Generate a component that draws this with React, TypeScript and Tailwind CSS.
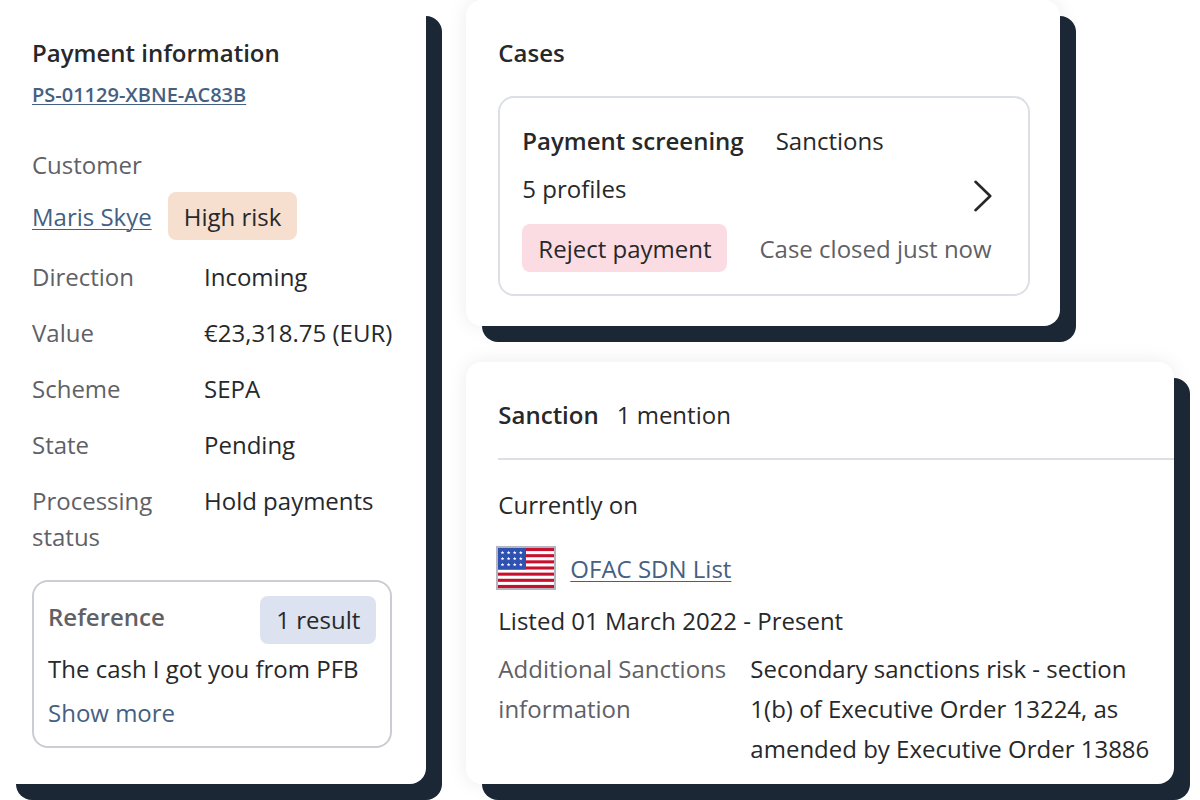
import type { ReactNode } from "react";

const details = [
  { label: "Direction", value: "Incoming" },
  { label: "Value", value: "€23,318.75 (EUR)" },
  { label: "Scheme", value: "SEPA" },
  { label: "State", value: "Pending" },
  { label: "Processing status", value: "Hold payments" },
];

function Card({ className = "", children }: { className?: string; children: ReactNode }) {
  return (
    <section
      className={`rounded-2xl bg-white ${className}`}
    >
      {children}
    </section>
  );
}

function Pill({ tone, children }: { tone: string; children: ReactNode }) {
  return (
    <span className={`flex h-12 items-center rounded-lg px-4 whitespace-nowrap ${tone}`}>
      {children}
    </span>
  );
}

const STAR = "M0-1.9L.5-.6 1.8-.6.8.3 1.1 1.6 0 .8-1.1 1.6-.8.3-1.8-.6-.5-.6z";

function UsFlag() {
  return (
    <svg viewBox="0 0 60 44" className="-ml-0.5 h-11 w-[60px] shrink-0" role="img" aria-label="United States">
      <rect width="60" height="44" fill="#b3b5c1" />
      <rect x="2" y="2" width="56" height="40" fill="#fff" />
      {[0, 2, 4, 6, 8, 10, 12].map((n) => (
        <rect key={n} x="2" y={2 + (n * 40) / 13} width="56" height={40 / 13} fill="#c8102e" />
      ))}
      <rect x="2" y="2" width="28" height="21.5" fill="#2f52b0" />
      {[6.6, 12.6, 18.6].map((y) =>
        [6.5, 12.6, 18.7, 24.8].map((x) => (
          <path key={`${x}-${y}`} d={STAR} transform={`translate(${x} ${y})`} fill="#fff" />
        )),
      )}
    </svg>
  );
}

function PaymentInformation() {
  return (
    <Card className="pt-[35px] pr-[34px] pb-9 pl-8 shadow-[16px_16px_0_0_#1b2735]">
      <h2 className="font-semibold">Payment information</h2>
      <a
        href="#payment"
        className="mt-2.5 block w-fit text-xl leading-7 font-semibold text-[#456082] underline decoration-1 underline-offset-2"
      >
        PS-01129-XBNE-AC83B
      </a>
      <p className="mt-[38px] text-[#5f6166]">Customer</p>
      <div className="mt-[9px] flex items-center gap-4">
        <a href="#customer" className="pt-0.5 text-[#456082] underline decoration-1 underline-offset-3">
          Maris Skye
        </a>
        <Pill tone="bg-[#f6dfcf] pt-0.5">High risk</Pill>
      </div>
      <dl className="mt-[19px] flex flex-col gap-5">
        {details.map(({ label, value }) => (
          <div key={label} className="grid grid-cols-[140px_1fr] gap-8">
            <dt className="text-[#5f6166]">{label}</dt>
            <dd className="whitespace-nowrap">{value}</dd>
          </div>
        ))}
      </dl>
      <div className="mt-[25px] rounded-2xl border-2 border-[#cacdd2] p-3.5">
        <div className="flex items-start justify-between">
          <h3 className="pt-[3px] font-semibold text-[#5f6166]">Reference</h3>
          <Pill tone="bg-[#dce2f0]">1 result</Pill>
        </div>
        <p className="mt-[7px] whitespace-nowrap">The cash I got you from PFB</p>
        <button type="button" className="mt-2 mb-px block cursor-pointer text-[#456082]">
          Show more
        </button>
      </div>
    </Card>
  );
}

const HALO = "shadow-[16px_16px_0_0_#1b2735,0_0_20px_0_rgba(0,0,0,0.08)]";

function Cases() {
  return (
    <Card className={`mr-[114px] pt-[35px] pr-[30px] pb-[30px] pl-8 ${HALO}`}>
      <h2 className="font-semibold">Cases</h2>
      <div className="mt-[25px] rounded-2xl border-2 border-[#dcdfe4] pt-[25px] pr-9 pb-[22px] pl-[22px]">
        <div className="flex items-end justify-between">
          <div className="pb-[5px]">
            <div className="flex gap-8">
              <h3 className="font-semibold">Payment screening</h3>
              <p>Sanctions</p>
            </div>
            <p className="mt-3">5 profiles</p>
          </div>
          <button type="button" aria-label="Open case" className="cursor-pointer">
            <svg viewBox="0 0 20 32" className="block h-8 w-5" fill="none">
              <path
                d="M3.5 1.8L18.2 16 3.5 30.2"
                stroke="#27282a"
                strokeWidth="2.6"
                strokeLinecap="round"
                strokeLinejoin="round"
              />
            </svg>
          </button>
        </div>
        <div className="mt-3 flex items-center gap-8">
          <Pill tone="bg-[#fcdce3] pt-0.5">Reject payment</Pill>
          <p className="pt-0.5 whitespace-nowrap text-[#5f6166]">Case closed just now</p>
        </div>
      </div>
    </Card>
  );
}

function Sanction() {
  return (
    <Card className={`pt-[35px] pb-[15px] pl-8 ${HALO}`}>
      <div className="flex gap-[18px]">
        <h2 className="font-semibold">Sanction</h2>
        <p>1 mention</p>
      </div>
      <hr className="mt-[25px] border-t-2 border-[#dcdfe4]" />
      <p className="mt-[27px]">Currently on</p>
      <div className="mt-[23px] flex items-center gap-3.5">
        <UsFlag />
        <a href="#ofac" className="pt-0.5 text-[#456082] underline decoration-1 underline-offset-3">
          OFAC SDN List
        </a>
      </div>
      <p className="mt-[13px]">Listed 01 March 2022 - Present</p>
      <dl className="mt-2.5 grid grid-cols-[232px_1fr] gap-5 pr-4 leading-10">
        <dt className="text-[#5f6166]">Additional Sanctions information</dt>
        <dd>Secondary sanctions risk - section 1(b) of Executive Order 13224, as amended by Executive Order 13886</dd>
      </dl>
    </Card>
  );
}

export default function App() {
  return (
    <main className="grid min-h-screen grid-cols-[426fr_708fr] gap-10 bg-white pr-[26px] pb-4 font-['Open_Sans','Noto_Sans',sans-serif] text-2xl leading-9 text-[#27282a]">
      <PaymentInformation />
      <div className="flex flex-col gap-9">
        <Cases />
        <Sanction />
      </div>
    </main>
  );
}
